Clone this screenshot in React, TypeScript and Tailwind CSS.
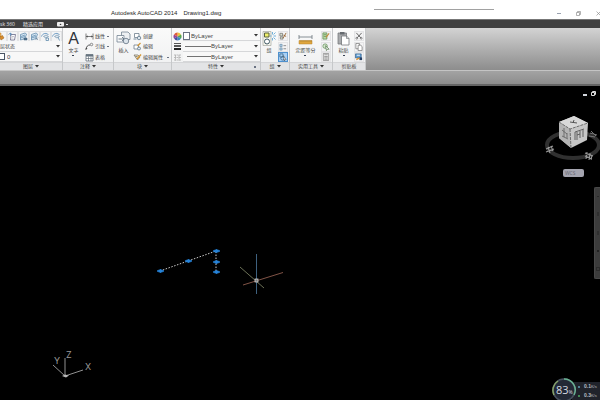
import type { ReactNode } from "react";

type IconProps = { size?: number; children: ReactNode };

function Icon({ size = 9, children }: IconProps) {
  return (
    <svg width={size} height={size} viewBox="0 0 18 18" fill="none" className="shrink-0" aria-hidden="true">
      {children}
    </svg>
  );
}

function Caret() {
  return (
    <svg width="4" height="3" viewBox="0 0 8 6" className="shrink-0" aria-hidden="true">
      <path d="M0 0h8L4 5z" fill="#333" />
    </svg>
  );
}

function Dot() {
  return <span className="h-px w-0.5 shrink-0 bg-gray-500" />;
}

const layerIcons: { label: string; kind: "state" | "stack" | "iso" | "page" | "arc"; flip?: boolean }[] = [
  { label: "图层特性", kind: "state" },
  { label: "关闭图层", kind: "page" },
  { label: "隔离图层", kind: "stack" },
  { label: "冻结图层", kind: "stack", flip: true },
  { label: "锁定图层", kind: "arc" },
  { label: "置为当前", kind: "iso" },
];

function LayerIcon({ kind, flip }: { kind: string; flip?: boolean }) {
  if (kind === "state")
    return (
      <Icon>
        <path d="M2 2h6v8H2z" fill="#f0b65c" stroke="#b87824" />
        <path d="M5 10l6-3 3 5-6 4z" fill="#d98b2a" stroke="#8f5c1c" />
      </Icon>
    );
  if (kind === "page")
    return (
      <Icon>
        <path d="M6 5h9l-2 11H5z" fill="#fff" stroke="#557" strokeWidth="1.4" />
        <path d="M1 5l4-3 3 3M5 2v6" stroke="#4c83b6" strokeWidth="1.5" />
        <path d="M8 9h4M7 12h4" stroke="#889" />
      </Icon>
    );
  if (kind === "stack")
    return (
      <Icon>
        <path d="M3 5l9-3 3 2-3 9-9 3z" fill="#d8e8f4" stroke="#5582a8" strokeWidth="1.4" />
        <path d="M4 9l8-3M3 12l9-3" stroke="#5582a8" strokeWidth="1.4" />
        <path d={flip ? "M11 11l5 5M16 11l-5 5" : "M10 12h6v4h-6z"} fill="#54738f" stroke="#3b5c7a" />
      </Icon>
    );
  return (
    <Icon>
      <path d="M1 9c2-7 11-8 14-3" stroke="#6e9cc4" strokeWidth="2" />
      <path d="M5 9l5-3 5 3-5 3z" fill="#dce9f2" stroke="#6e8ba5" strokeWidth="1.3" />
      <path d={kind === "arc" ? "M10 12v5h5v-5z" : "M12 10l3 7"} stroke="#5a87aa" strokeWidth="1.5" />
    </Icon>
  );
}

function Panel({ title, width, caret = true, launcher = false, children }: { title: string; width: string; caret?: boolean; launcher?: boolean; children: ReactNode }) {
  return (
    <section className={`flex shrink-0 flex-col border-r border-[#c6c8ca] bg-linear-to-b from-[#fafafa] to-[#eff0f1] ${width}`}>
      <div className="flex h-[34px] items-stretch">{children}</div>
      <button className="relative flex h-2 w-full items-center justify-center gap-0.5 border-t border-[#d5d6d8] bg-[#e3e4e6] text-[5px] leading-none text-[#444]">
        {title}
        {caret && <Caret />}
        {launcher && <span className="absolute right-1 h-0.5 w-0.5 bg-gray-500" />}
      </button>
    </section>
  );
}

function BigButton({ label, caret, children }: { label: string; caret?: boolean; children: ReactNode }) {
  return (
    <button className="flex flex-col items-center pt-px text-[5px] leading-none text-[#444]">
      <span className="flex h-[19px] items-center">{children}</span>
      <span className="whitespace-nowrap">{label}</span>
      {caret && <span className="mt-0.5 h-px w-0.5 bg-gray-700" />}
    </button>
  );
}

function SmallButton({ label, dot, children }: { label: string; dot?: boolean; children: ReactNode }) {
  return (
    <button className="flex h-2.5 w-full items-center gap-px text-[5px] leading-none text-[#444]">
      {children}
      <span className="whitespace-nowrap">{label}</span>
      {dot && <span className="ml-auto flex"><Dot /></span>}
    </button>
  );
}

function IconButton({ label, active, children }: { label: string; active?: boolean; children: ReactNode }) {
  return (
    <button aria-label={label} className={`grid h-2.5 w-2.5 place-items-center border ${active ? "border-[#4f91cf] bg-[#a9d0f5]" : "border-[#e4e4e6] bg-[#f3f3f4]"}`}>
      {children}
    </button>
  );
}

function Dropdown({ label, value, lead, small }: { label: string; value: string; lead?: ReactNode; small?: boolean }) {
  return (
    <label className="flex h-2.5 min-w-0 flex-1 items-center border-b border-[#d6d7d9] bg-[#f8f8f8] pr-0.5">
      {lead}
      <select aria-label={label} className={`min-w-0 flex-1 appearance-none bg-transparent font-[family-name:Liberation_Sans,Noto_Sans_CJK_SC,sans-serif] leading-none text-[#444] ${small ? "text-[5px]" : "text-[6px]"}`}>
        <option>{value}</option>
      </select>
      <Caret />
    </label>
  );
}

function Ribbon() {
  return (
    <div className="flex overflow-hidden border-b border-[#c4c4c4] bg-linear-to-b from-[#d3d3d3] to-[#8d8d8d]">
      <Panel title="图层" width="w-[63px]">
        <div className="flex w-full flex-col justify-between pt-[3px]">
          <div className="flex h-2.5 items-center overflow-hidden">
            <div className="-ml-1 flex w-full items-center justify-between pr-0.5">
              {layerIcons.map((i) => (
                <button key={i.label} aria-label={i.label} className="border border-[#e1e2e4] bg-[#f3f4f5]">
                  <LayerIcon kind={i.kind} flip={i.flip} />
                </button>
              ))}
            </div>
          </div>
          <div className="flex"><Dropdown label="图层状态" value="层状态" small /></div>
          <div className="flex">
            <Dropdown label="图层" value="0" lead={<span className="mr-0.5 h-[7px] w-[5px] border border-l-0 border-gray-600 bg-white" />} />
          </div>
        </div>
      </Panel>

      <Panel title="注释" width="w-[51px]">
        <div className="flex w-[21px] justify-center">
          <BigButton label="文字" caret>
            <span className="font-[family-name:Liberation_Sans,sans-serif] text-[16px] leading-none text-[#30343a]">A</span>
          </BigButton>
        </div>
        <div className="flex flex-1 flex-col justify-between pt-[3px] pr-1 pl-px">
          <SmallButton label="线性" dot>
            <Icon>
              <path d="M2 3v12M16 3v12M2 9h14" stroke="#555" strokeWidth="1.5" />
              <path d="M2 9l4-2v4zM16 9l-4-2v4z" fill="#555" />
            </Icon>
          </SmallButton>
          <SmallButton label="引线" dot>
            <Icon>
              <path d="M2 15C3 9 5 6 10 6" stroke="#444" strokeWidth="1.8" />
              <path d="M1 16l1-5 3 2z" fill="#444" />
              <circle cx="13" cy="5" r="2.5" stroke="#555" strokeWidth="1.3" />
            </Icon>
          </SmallButton>
          <SmallButton label="表格">
            <Icon>
              <path d="M2 3h14v13H2z" fill="#fff" stroke="#53606c" strokeWidth="1.4" />
              <path d="M2 3h14v4H2z" fill="#65737f" />
              <path d="M2 11h14M7 7v9M12 7v9" stroke="#53606c" strokeWidth="1.2" />
            </Icon>
          </SmallButton>
        </div>
      </Panel>

      <Panel title="块" width="w-[58px]">
        <div className="flex w-[19px] justify-center">
          <BigButton label="插入">
            <svg width="15" height="15" viewBox="0 0 30 30" fill="none" aria-hidden="true">
              <path d="M11 2h13l4 4v11H11z" fill="#edf0f3" stroke="#748492" strokeWidth="1.6" />
              <path d="M2 9h14v13H2z" fill="#fafbfc" stroke="#748492" strokeWidth="1.6" />
              <circle cx="20" cy="20" r="5.5" fill="#dce4eb" stroke="#647585" strokeWidth="1.6" />
              <path d="M5 16h10M12 12l4 4-4 4" stroke="#647585" strokeWidth="1.8" />
            </svg>
          </BigButton>
        </div>
        <div className="flex flex-1 flex-col justify-between pt-[3px] pr-0.5">
          <SmallButton label="创建">
            <Icon>
              <path d="M3 3h9v8H3z" fill="#fff" stroke="#667786" strokeWidth="1.5" />
              <circle cx="12" cy="12" r="3.5" fill="#e1e8ee" stroke="#4c6880" strokeWidth="1.4" />
              <path d="M1 14h6" stroke="#4c6880" strokeWidth="1.5" />
            </Icon>
          </SmallButton>
          <SmallButton label="编辑">
            <Icon>
              <path d="M2 6h9v8H2z" fill="#fff" stroke="#667786" strokeWidth="1.5" />
              <circle cx="12" cy="13" r="3" fill="#e1e8ee" stroke="#4c6880" strokeWidth="1.4" />
              <path d="M9 8l6-6" stroke="#d49634" strokeWidth="2.6" />
            </Icon>
          </SmallButton>
          <SmallButton label="编辑属性" dot>
            <Icon>
              <path d="M2 4h8l4 4-5 6z" fill="#f0e4c6" stroke="#6f6a5c" strokeWidth="1.4" />
              <path d="M8 12l8-9" stroke="#d49634" strokeWidth="2.6" />
              <path d="M5 7h4" stroke="#666" strokeWidth="1.4" />
            </Icon>
          </SmallButton>
        </div>
      </Panel>

      <Panel title="特性" width="w-[89px]" launcher>
        <div className="flex w-full flex-col justify-between pt-[3px] pl-px">
          <div className="flex items-center gap-px">
            <Icon>
              <path d="M9 9V1a8 8 0 0 1 7 4z" fill="#f0c33c" />
              <path d="M9 9l7-4a8 8 0 0 1 0 8z" fill="#55a64c" />
              <path d="M9 9l7 4a8 8 0 0 1-7 4z" fill="#3c8bc0" />
              <path d="M9 9v8a8 8 0 0 1-7-4z" fill="#4150a0" />
              <path d="M9 9l-7 4a8 8 0 0 1 0-8z" fill="#974596" />
              <path d="M9 9L2 5a8 8 0 0 1 7-4z" fill="#df5b3a" />
            </Icon>
            <Dropdown label="对象颜色" value="ByLayer" lead={<span className="mr-px h-2 w-[7px] border border-gray-500 bg-white" />} />
          </div>
          <div className="flex items-center gap-px">
            <Icon>
              <path d="M2 3h14" stroke="#222" strokeWidth="1.5" />
              <path d="M2 8h14" stroke="#222" strokeWidth="3" />
              <path d="M2 14h14" stroke="#222" strokeWidth="4" />
            </Icon>
            <Dropdown label="线宽" value="ByLayer" lead={<span className="ml-0.5 h-px w-[26px] bg-neutral-500" />} />
          </div>
          <div className="flex items-center gap-px">
            <Icon>
              <path d="M2 4h14M2 9h14M2 14h14M5 4v11M12 4v11" stroke="#aaa" strokeWidth="1.5" strokeDasharray="4 1" />
            </Icon>
            <Dropdown label="线型" value="ByLayer" lead={<span className="ml-1 h-px w-6 bg-neutral-500" />} />
          </div>
        </div>
      </Panel>

      <Panel title="组" width="w-[29px]">
        <div className="flex w-4 justify-center">
          <BigButton label="组">
            <svg width="14" height="15" viewBox="0 0 28 30" fill="none" aria-hidden="true">
              <path d="M2 1h16v28H2z" fill="#f6f6ed" stroke="#a5a8a0" strokeWidth="1.4" />
              <path d="M5 4h9v8H5z" fill="#eff06b" stroke="#58613d" strokeWidth="2" />
              <circle cx="10" cy="21" r="5" fill="#fff" stroke="#3f5964" strokeWidth="2" />
              <path d="M21 2v5M21 14v5M19 10h-3M23 10h5M23 7l4-4M23 13l4 4" stroke="#63a9d7" strokeWidth="1.8" />
            </svg>
          </BigButton>
        </div>
        <div className="flex flex-col justify-between pt-[3px] pl-px">
          <IconButton label="解除编组">
            <Icon size={8}>
              <path d="M2 3h6v6H2zM3 11h6v5H3z" fill="#d9e0d0" stroke="#666" strokeWidth="1.5" />
              <path d="M9 14l7-12M10 7l6 3" stroke="#94612c" strokeWidth="2" />
            </Icon>
          </IconButton>
          <IconButton label="组编辑">
            <Icon size={8}>
              <path d="M2 3h5v5H2zM2 11h5v5H2z" fill="#b7d3ea" stroke="#5e84a2" strokeWidth="1.4" />
              <path d="M10 6h6M10 13h6" stroke="#777" strokeWidth="1.8" />
            </Icon>
          </IconButton>
          <IconButton label="启用组选择" active>
            <Icon size={8}>
              <path d="M2 2h7v7H2z" stroke="#315d83" strokeWidth="1.6" />
              <circle cx="8" cy="12" r="4" stroke="#315d83" strokeWidth="1.6" />
              <path d="M10 6l6 9-3 0-1 3z" fill="#fff" stroke="#333" />
            </Icon>
          </IconButton>
        </div>
      </Panel>

      <Panel title="实用工具" width="w-[43px]">
        <div className="flex w-[31px] justify-center">
          <BigButton label="定距等分" caret>
            <svg width="15" height="12" viewBox="0 0 30 24" fill="none" aria-hidden="true">
              <path d="M2 4v8M28 4v8M2 8h26" stroke="#69737b" strokeWidth="1.6" />
              <path d="M2 15h26v7H2z" fill="#dfa63e" stroke="#b6812b" />
              <path d="M6 15v3M10 15v3M14 15v3M18 15v3M22 15v3M26 15v3" stroke="#8b6827" />
            </svg>
          </BigButton>
        </div>
        <div className="flex flex-col justify-between pt-[3px]">
          <IconButton label="快速选择">
            <Icon size={8}>
              <path d="M2 2h9v14H2z" fill="#b9d9a7" stroke="#568245" strokeWidth="1.5" />
              <path d="M4 6h5M4 10h5" stroke="#568245" strokeWidth="1.4" />
              <path d="M9 12l7-9" stroke="#c58a3c" strokeWidth="2.5" />
            </Icon>
          </IconButton>
          <IconButton label="全部选择">
            <Icon size={8}>
              <circle cx="7" cy="7" r="5" fill="#d6e9ce" stroke="#54844b" strokeWidth="1.5" />
              <path d="M8 6l8 8-4 0-2 3z" fill="#fff" stroke="#446d3e" strokeWidth="1.5" />
            </Icon>
          </IconButton>
          <IconButton label="快速计算器">
            <Icon size={8}>
              <path d="M3 1h12v16H3z" fill="#f6f6f6" stroke="#777" strokeWidth="1.5" />
              <path d="M5 4h8M5 8h8M5 11h8M5 14h8" stroke="#777" strokeWidth="1.6" />
            </Icon>
          </IconButton>
        </div>
      </Panel>

      <Panel title="剪贴板" width="w-[33px]" caret={false}>
        <div className="flex w-[21px] justify-center">
          <BigButton label="粘贴" caret>
            <svg width="13" height="15" viewBox="0 0 26 30" fill="none" aria-hidden="true">
              <path d="M2 4h17v22H2z" fill="#a9abad" stroke="#737679" strokeWidth="1.5" />
              <path d="M6 2h9v5H6z" fill="#666b70" />
              <path d="M9 10h10l5 5v13H9z" fill="#fff" stroke="#6d7276" strokeWidth="1.5" />
              <path d="M19 10v5h5" stroke="#6d7276" strokeWidth="1.3" />
            </svg>
          </BigButton>
        </div>
        <div className="flex flex-col justify-between pt-[3px]">
          <IconButton label="剪切">
            <Icon size={8}>
              <path d="M3 2l10 11M15 2L5 13" stroke="#444" strokeWidth="1.8" />
              <circle cx="4" cy="14" r="2" stroke="#555" strokeWidth="1.5" />
              <circle cx="14" cy="14" r="2" stroke="#555" strokeWidth="1.5" />
            </Icon>
          </IconButton>
          <IconButton label="复制">
            <Icon size={8}>
              <path d="M2 1h8v12H2z" fill="#fff" stroke="#666" strokeWidth="1.5" />
              <path d="M7 5h6l3 3v9H7z" fill="#fff" stroke="#666" strokeWidth="1.5" />
            </Icon>
          </IconButton>
          <IconButton label="特性匹配">
            <Icon size={8}>
              <path d="M1 2h13v9H1z" fill="#5d9bd1" stroke="#325c86" strokeWidth="1.5" />
              <path d="M4 5h7" stroke="#fff" strokeWidth="2" />
              <path d="M10 10h6v6h-6z" fill="#263f64" />
              <path d="M3 15l7-4" stroke="#d99336" strokeWidth="3" />
            </Icon>
          </IconButton>
        </div>
      </Panel>
    </div>
  );
}

const grips = [
  [160, 185],
  [188, 175],
  [216, 165],
  [216, 176],
  [216, 186],
];

function ViewCube() {
  return (
    <svg width="58" height="50" viewBox="0 0 58 50" fill="none" className="absolute top-[26px] right-0" aria-label="ViewCube">
      <ellipse cx="31" cy="33" rx="26" ry="13" stroke="#303030" strokeWidth="4" />
      <path d="M17 10l15-6 14 7-1 17-16 8-12-10z" fill="#c6c6c6" />
      <path d="M17 10l15-6 14 7-18 6z" fill="#d8d8d8" />
      <path d="M17 10l11 7 1 19-12-10z" fill="#b4b4b4" />
      <path d="M17 10l11 7 18-6M28 17l1 19" stroke="#555" strokeWidth=".8" strokeDasharray="3 1" />
      <path d="M28 10l7 1M32 8l-1 3" stroke="#555" />
      <path d="M20 18l5 4M22 16v9M20 24l6 3M25 21v5" stroke="#666" strokeWidth=".9" />
      <path d="M33 20l9-3M33 20v8M35 20v8M38 19v7M41 18v7M35 23l3-1" stroke="#555" strokeWidth=".9" />
      <path d="M4 37l7-3M4 40l8-3M6 35l2 6M9 34l2 5" stroke="#999" strokeWidth="1.1" />
      <path d="M43 41l8 3M43 44l7 3M45 40l-1 7M48 41l-1 7M50 43l-1 5" stroke="#999" strokeWidth="1.1" />
      <path d="M48 21l7 2M49 19l5 5M47 24l6 1" stroke="#777" />
    </svg>
  );
}

function Canvas() {
  return (
    <main className="relative flex-1 overflow-hidden bg-black">
      <svg className="absolute inset-0 h-full w-full" fill="none" aria-label="Drawing1">
        <path d="M160 185L216 165V186" stroke="#c9c9c9" strokeDasharray="1.5 1.5" />
        {grips.map(([x, y]) => (
          <path key={`${x}-${y}`} d={`M${x - 3} ${y}l2-1h1l.5-1 .5 1h1l2 1-2 1h-1l-.5 1-.5-1h-1z`} fill="#2583d8" stroke="#2583d8" strokeWidth=".7" />
        ))}
        <path d="M256.500 168V208" stroke="#3e617f" />
        <path d="M243 199L283 186.500" stroke="#805346" />
        <path d="M240 181L264 202" stroke="#6c7157" />
        <rect x="255" y="193" width="3" height="3" fill="#777" stroke="#d0d0d0" strokeWidth=".8" />
        <path d="M65 290V272M65 290L83 284M65 290L53 279" stroke="#909090" />
        <path d="M62 290l3-1.500 4 1-3 2z" fill="#bbb" />
        <g fill="#999" className="font-[family-name:Inter,sans-serif] text-[9px]">
          <text x="66" y="272">Z</text>
          <text x="85" y="284">X</text>
          <text x="54" y="278">Y</text>
        </g>
      </svg>

      <div className="absolute top-1 right-1 flex items-center gap-1">
        <button aria-label="最小化视口" className="flex h-1.5 w-1 items-end">
          <span className="block h-0.5 w-1 bg-gray-300" />
        </button>
        <button aria-label="还原视口">
          <svg width="5" height="5" viewBox="0 0 10 10" fill="none" className="block" aria-hidden="true">
            <path d="M3 3V1h6v6H7M1 3h6v6H1z" stroke="#ddd" strokeWidth="2" />
          </svg>
        </button>
      </div>

      <ViewCube />
      <button className="absolute top-[83px] right-4 flex h-2 w-[21px] items-center rounded-xs bg-[#a5a5b0] pl-0.5 text-[5px] leading-none text-[#666672]">
        WCS
      </button>
      <nav aria-label="导航栏" className="absolute top-[101px] right-0 flex h-[92px] w-1.5 flex-col items-center justify-around rounded-l-xs border border-r-0 border-[#484848] bg-[#3c3c3c]">
        <span className="h-px w-0.5 bg-[#292929]" />
        <span className="h-1 w-0.5 bg-[#303030]" />
        <span className="h-1 w-0.5 bg-[#303030]" />
        <span className="h-0.5 w-0.5 bg-[#222]" />
        <span className="h-1 w-1 border border-[#2c2c2c]" />
      </nav>

      <aside className="absolute right-0 bottom-0 h-[22px] w-12 overflow-hidden">
        <div className="absolute top-1 right-0 flex h-[18px] w-[28px] flex-col justify-around bg-[#20232b] pl-1.5 font-[family-name:Liberation_Sans,sans-serif] text-[5px] leading-none font-bold text-[#b9bdc3]">
          <span className="flex items-center whitespace-nowrap">
            <span className="mr-1 h-0.5 w-0.5 shrink-0 rounded-full bg-[#5fa1b9]" />0.1<span className="text-[4px] font-normal">K/s</span>
          </span>
          <span className="flex items-center whitespace-nowrap">
            <span className="mr-1 h-0.5 w-0.5 shrink-0 rounded-full bg-[#4fae66]" />0.3<span className="text-[4px] font-normal">K/s</span>
          </span>
        </div>
        <svg width="24" height="24" viewBox="0 0 24 24" className="absolute top-0 left-0" fill="none" aria-hidden="true">
          <circle cx="12" cy="12" r="11" fill="#232936" stroke="#46505d" strokeWidth="1.5" />
          <path d="M12 1A11 11 0 0 1 22 17" stroke="#69b292" strokeWidth="1.4" />
          <path d="M2 17A11 11 0 0 1 6 3" stroke="#89a667" strokeWidth="1.4" />
        </svg>
        <span className="absolute top-1 left-1 flex items-baseline font-[family-name:Open_Sans,sans-serif] text-[11px] leading-4 text-[#d4dae0]">
          83<span className="text-[5px]">%</span>
        </span>
      </aside>
    </main>
  );
}

export default function App() {
  return (
    <div className="flex min-h-screen flex-col bg-black font-[family-name:Open_Sans,Noto_Sans_CJK_SC,sans-serif]">
      <header className="relative flex h-[19px] items-end bg-white pb-0.5">
        <span className="absolute top-[9px] left-[374px] h-px w-[120px] bg-neutral-400" />
        <h1 className="flex gap-1.5 pl-[111px] font-[family-name:Liberation_Sans,sans-serif] text-[6px] leading-[7px] whitespace-nowrap text-neutral-800">
          <span>Autodesk AutoCAD 2014</span>
          <span>Drawing1.dwg</span>
        </h1>
        <div className="ml-auto flex h-2 items-center gap-[15px]">
          <button aria-label="最小化"><span className="block h-px w-1 bg-gray-400" /></button>
          <button aria-label="还原">
            <svg width="5" height="5" viewBox="0 0 10 10" fill="none" className="block" aria-hidden="true">
              <path d="M3 3V1h6v6H7M1 3h6v6H1z" stroke="#888" strokeWidth="1.3" />
            </svg>
          </button>
          <button aria-label="关闭">
            <svg width="4" height="5" viewBox="0 0 8 10" className="block" aria-hidden="true">
              <path d="M1 1l8 8M9 1L1 9" stroke="#888" strokeWidth="1.3" />
            </svg>
          </button>
        </div>
      </header>

      <nav className="flex h-[9px] items-center gap-2 border-t border-[#777] bg-[#404040] text-[5px] leading-none whitespace-nowrap text-gray-200">
        <button>sk 360</button>
        <button>精选应用</button>
        <button aria-label="显示选项" className="ml-1 flex items-center gap-0.5">
          <svg width="7" height="5" viewBox="0 0 14 10" className="ml-0.5" aria-hidden="true">
            <rect width="14" height="9" rx="2" fill="#eee" />
            <path d="M5 6l2-3 2 3z" fill="#333" />
          </svg>
          <span className="h-px w-0.5 bg-gray-200" />
        </button>
      </nav>

      <Ribbon />
      <div className="h-[15px] border-b-2 border-[#656565] bg-linear-to-b from-[#a3a3a3] to-[#8d8d8d]" />
      <Canvas />
    </div>
  );
}
